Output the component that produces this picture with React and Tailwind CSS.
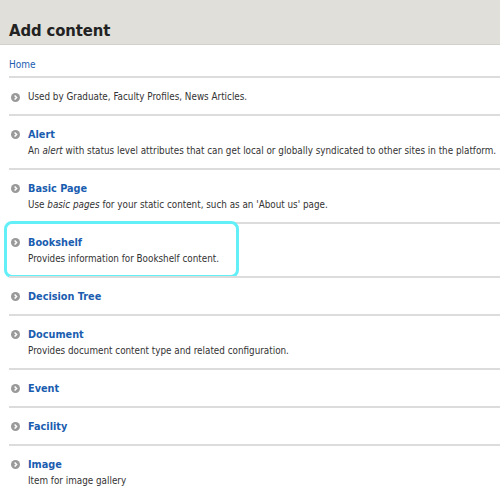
const items = [
  { desc: "Used by Graduate, Faculty Profiles, News Articles." },
  {
    title: "Alert",
    desc: (
      <>
        An <em>alert</em> with status level attributes that can get local or globally syndicated to other sites in the platform.
      </>
    ),
  },
  {
    title: "Basic Page",
    desc: (
      <>
        Use <em>basic pages</em> for your static content, such as an 'About us' page.
      </>
    ),
  },
  { title: "Bookshelf", desc: "Provides information for Bookshelf content.", highlight: true },
  { title: "Decision Tree" },
  { title: "Document", desc: "Provides document content type and related configuration." },
  { title: "Event" },
  { title: "Facility" },
  { title: "Image", desc: "Item for image gallery" },
];

function Arrow() {
  return (
    <svg width="9" height="9" viewBox="0 0 9 9" className="shrink-0">
      <circle cx="4.5" cy="4.5" r="4.5" fill="#9a9a9a" />
      <path d="M3.6 2.4 L5.6 4.5 L3.6 6.6" fill="none" stroke="#fff" strokeWidth="1.5" />
    </svg>
  );
}

export default function App() {
  return (
    <div className="w-[500px] h-[495px] overflow-hidden bg-white font-['DejaVu_Sans_Condensed','DejaVu_Sans',sans-serif] text-[#333]">
      <header className="h-[45px] bg-[#e0dfd9] border-b border-[#d2d1cb] px-[9px] flex items-end pb-[3px]">
        <h1 className="text-[16.5px] font-bold text-[#222] leading-[20px] tracking-[-0.1px]">Add content</h1>
      </header>

      <div className="pl-[9px]">
        <div className="h-[31px] flex items-center pt-[7px]">
          <a className="text-[10px] text-[#1a5db0]">Home</a>
        </div>

        <ul>
          {items.map((item, i) => (
            <li
              key={i}
              className={
                item.title && !item.desc
                  ? "relative border-t-2 border-[#dcdcdc] pt-[11px] pb-[10px] pl-[2px]"
                  : "relative border-t-2 border-[#dcdcdc] pt-[11px] pb-[9px] pl-[2px]"
              }
            >
              {item.highlight && (
                <div className="absolute -top-[3px] -left-[5px] w-[235px] h-[57px] rounded-[8px] border-[3px] border-[#62eff7]" />
              )}
              {item.title ? (
                <>
                  <div className="flex items-center gap-[8px] h-[15px]">
                    <Arrow />
                    <span className="text-[10.8px] font-bold text-[#1a5db0] leading-[15px]">{item.title}</span>
                  </div>
                  {item.desc && (
                    <p className="pl-[17px] text-[9.8px] leading-[17px]">{item.desc}</p>
                  )}
                </>
              ) : (
                <div className="flex items-center gap-[8px] h-[16px]">
                  <Arrow />
                  <span className="text-[9.8px]">{item.desc}</span>
                </div>
              )}
            </li>
          ))}
        </ul>
      </div>
    </div>
  );
}
